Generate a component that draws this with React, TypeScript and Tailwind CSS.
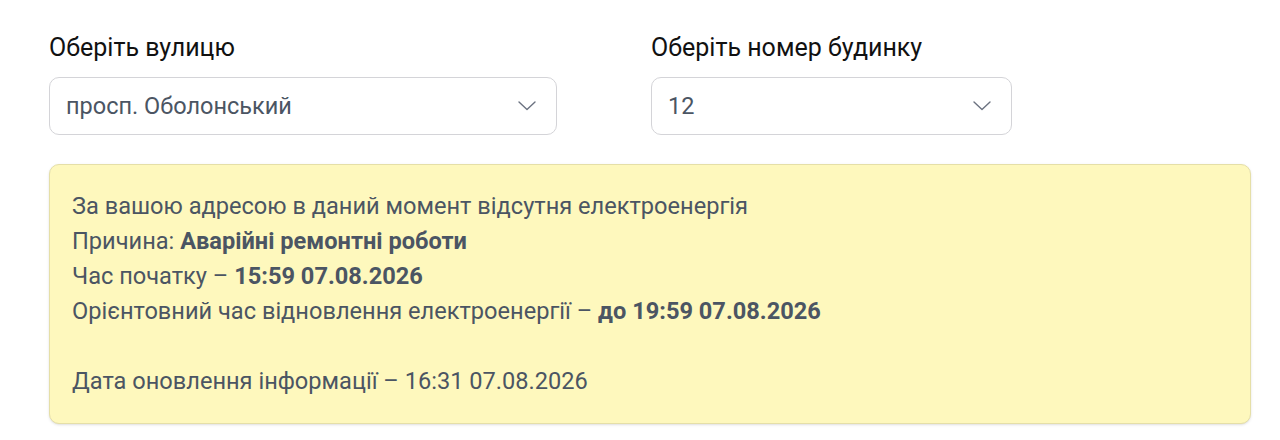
import React from 'react';

const Chevron = () => (
  <svg width="18" height="10" viewBox="0 0 18 10" fill="none" className="shrink-0">
    <polyline points="1,1 9,8.5 17,1" stroke="#6b7280" strokeWidth="1.4" strokeLinecap="round" strokeLinejoin="round" />
  </svg>
);

const SelectBox = ({ label, value, width }: { label: string; value: string; width: string }) => (
  <div className="flex flex-col">
    <label className="text-[25px] leading-[33px] text-[#111111] mb-[13px]">{label}</label>
    <div className={`${width} h-[58px] flex items-center justify-between pl-4 pr-[20px] border border-[#d4d4d8] rounded-[10px] bg-white`}>
      <span className="text-[23.5px] pt-[2px] text-[#4b5563]">{value}</span>
      <Chevron />
    </div>
  </div>
);

const App = () => {
  return (
    <div className="min-h-screen bg-white px-[49px] pt-[31px]" style={{ fontFamily: 'Roboto, "Noto Sans", sans-serif' }}>
      {/* Вибір адреси */}
      <div className="grid grid-cols-[602px_1fr]">
        <SelectBox label="Оберіть вулицю" value="просп. Оболонський" width="w-[508px]" />
        <SelectBox label="Оберіть номер будинку" value="12" width="w-[361px]" />
      </div>

      {/* Інформація про відключення */}
      <div className="mt-[29px] w-[1202px] border border-[#e5dfa8] bg-[#fef8bd] rounded-[10px] shadow-sm pl-[22px] pr-6 py-6 text-[23.6px] leading-[35px] text-[#4b5563]">
        <p>За вашою адресою в даний момент відсутня електроенергія</p>
        <p>
          Причина: <b className="font-bold">Аварійні ремонтні роботи</b>
        </p>
        <p>
          Час початку – <b className="font-bold">15:59 07.08.2026</b>
        </p>
        <p>
          Орієнтовний час відновлення електроенергії – <b className="font-bold">до 19:59 07.08.2026</b>
        </p>
        <p>&nbsp;</p>
        <p>Дата оновлення інформації – 16:31 07.08.2026</p>
      </div>
    </div>
  );
};

export default App;
